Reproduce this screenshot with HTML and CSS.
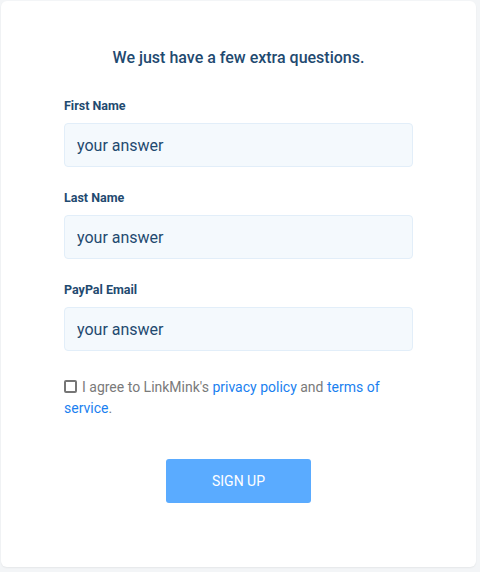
FILE: index.html
```html
<!DOCTYPE html>
<html>
<head>
<meta charset="utf-8">
<link rel="stylesheet" href="styles.css">
</head>
<body>
<div class="card">
  <h2 class="title">We just have a few extra questions.</h2>
  <form class="form">
    <div class="field">
      <label class="label">First Name</label>
      <input class="input" type="text" placeholder="your answer">
    </div>
    <div class="field">
      <label class="label">Last Name</label>
      <input class="input" type="text" placeholder="your answer">
    </div>
    <div class="field">
      <label class="label">PayPal Email</label>
      <input class="input" type="text" placeholder="your answer">
    </div>
    <p class="agree"><span class="box"></span>I agree to LinkMink's <a class="link">privacy policy</a> and <a class="link">terms of service</a>.</p>
    <div class="actions">
      <button class="btn" type="button">SIGN UP</button>
    </div>
  </form>
</div>
</body>
</html>
```
FILE: styles.css
```css
html, body {
  margin: 0;
  padding: 0;
  background: #f3f5f7;
  font-family: Roboto, "Liberation Sans", sans-serif;
}
.card {
  box-sizing: border-box;
  margin: 1px 4px 5px 1px;
  width: 475px;
  height: 566px;
  background: #ffffff;
  border-radius: 6px;
  box-shadow: 0 1px 2px rgba(0,0,0,0.06);
  padding: 45px 63px 0 63px;
}
.title {
  margin: 0;
  text-align: center;
  font-size: 16px;
  line-height: 24px;
  font-weight: 500;
  color: #1f4a70;
}
.form {
  margin-top: 27px;
}
.field {
  display: flex;
  flex-direction: column;
  margin-bottom: 22px;
}
.label {
  font-size: 12.5px;
  line-height: 16px;
  height: 16px;
  padding-top: 1px;
  font-weight: 700;
  color: #1f4a70;
  margin-bottom: 9px;
}
.input {
  box-sizing: border-box;
  width: 349px;
  height: 44px;
  border: 1px solid #e2eef9;
  border-radius: 4px;
  background: #f4f9fd;
  padding: 0 12px;
  font-family: Roboto, "Liberation Sans", sans-serif;
  font-size: 16px;
  color: #1f4a70;
  outline: none;
}
.input::placeholder {
  color: #1f4a70;
  opacity: 1;
}
.agree {
  margin: 26px 0 0 0;
  font-size: 14px;
  line-height: 21px;
  color: #7a7a7a;
}
.box {
  display: inline-block;
  box-sizing: border-box;
  width: 13px;
  height: 13px;
  border: 2px solid #767676;
  border-radius: 2px;
  vertical-align: -1px;
  margin-right: 5px;
}
.link {
  color: #1a7ff0;
  text-decoration: none;
}
.actions {
  display: flex;
  justify-content: center;
  margin-top: 40px;
}
.btn {
  width: 145px;
  height: 44px;
  border: none;
  border-radius: 3px;
  background: #5aabff;
  color: #ffffff;
  font-family: Roboto, "Liberation Sans", sans-serif;
  font-size: 14px;
  font-weight: 400;
}
```
